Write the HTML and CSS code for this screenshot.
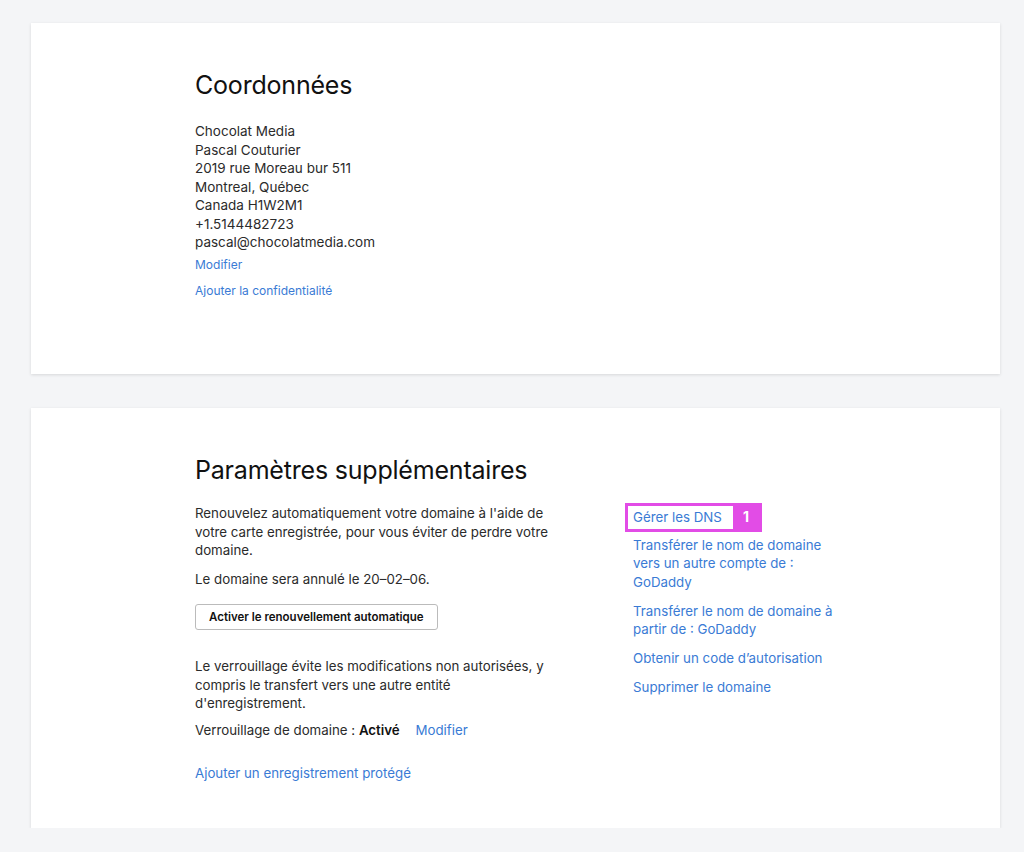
FILE: index.html
```html
<!doctype html>
<html lang="fr">
  <head>
    <meta charset="UTF-8" />
    <meta name="viewport" content="width=device-width, initial-scale=1.0" />
    <title>Paramètres du domaine</title>
    <link rel="stylesheet" href="styles.css">
  </head>
  <body>
    <div class="page">
      <section class="card card-contact">
        <h2>Coordonnées</h2>
        <div class="address">
          <div>Chocolat Media</div>
          <div>Pascal Couturier</div>
          <div>2019 rue Moreau bur 511</div>
          <div>Montreal, Québec</div>
          <div>Canada H1W2M1</div>
          <div>+1.5144482723</div>
          <div>pascal@chocolatmedia.com</div>
        </div>
        <a href="#" class="small-link">Modifier</a>
        <a href="#" class="small-link privacy">Ajouter la confidentialité</a>
      </section>

      <section class="card card-settings">
        <h2>Paramètres supplémentaires</h2>
        <div class="columns">
          <div class="left">
            <p>Renouvelez automatiquement votre domaine à l'aide de votre carte enregistrée, pour vous éviter de perdre votre domaine.</p>
            <p class="cancel">Le domaine sera annulé le 20–02–06.</p>
            <button class="renew-btn">Activer le renouvellement automatique</button>
            <p class="lock-text">Le verrouillage évite les modifications non autorisées, y compris le transfert vers une autre entité d'enregistrement.</p>
            <p class="lock-status">Verrouillage de domaine : <strong>Activé</strong> <a href="#" class="link">Modifier</a></p>
            <a href="#" class="link protect">Ajouter un enregistrement protégé</a>
          </div>
          <div class="right">
            <div class="dns-wrap">
              <a href="#" class="link dns">Gérer les DNS</a>
              <span class="badge">1</span>
            </div>
            <a href="#" class="link">Transférer le nom de domaine vers un autre compte de : GoDaddy</a>
            <a href="#" class="link">Transférer le nom de domaine à partir de : GoDaddy</a>
            <a href="#" class="link">Obtenir un code d’autorisation</a>
            <a href="#" class="link">Supprimer le domaine</a>
          </div>
        </div>
      </section>
    </div>
  </body>
</html>
```

FILE: styles.css
```css
body {
  font-family: "Inter", "Liberation Sans", sans-serif;
  margin: 0;
  background-color: #f4f5f7;
  color: #2b2b2b;
}

.page {
  width: 969px;
  margin: 0 0 0 31px;
  padding-top: 23px;
}

.card {
  background-color: white;
  box-shadow: 0 1px 3px rgba(0, 0, 0, 0.12);
  padding-left: 164px;
}

.card-contact {
  height: 351px;
  padding-top: 47px;
  box-sizing: border-box;
  margin-bottom: 34px;
}

.card-settings {
  height: 420px;
  padding-top: 47px;
  box-sizing: border-box;
}

h2 {
  font-size: 25px;
  font-weight: 400;
  color: #111;
  margin: 0;
  line-height: 30px;
  letter-spacing: -0.2px;
}

.address {
  margin-top: 22px;
  font-size: 13.5px;
  line-height: 18.5px;
}

.small-link {
  display: block;
  color: #3a7bd5;
  text-decoration: none;
  font-size: 12px;
  margin-top: 4px;
  line-height: 18px;
}

.small-link.privacy {
  margin-top: 8px;
}

.columns {
  display: flex;
  margin-top: 19px;
}

.left {
  width: 360px;
  font-size: 13.3px;
  line-height: 18.5px;
}

.left p {
  margin: 0;
}

.cancel {
  margin-top: 10px !important;
}

.renew-btn {
  margin-top: 16px;
  font-family: inherit;
  font-size: 11.5px;
  font-weight: 600;
  color: #111;
  background: white;
  border: 1px solid #bbb;
  border-radius: 3px;
  height: 26px;
  padding: 0 13px;
}

.lock-text {
  margin-top: 27px !important;
}

.lock-status {
  margin-top: 8px !important;
}

.lock-status strong {
  font-weight: 600;
  color: #111;
  margin-right: 12px;
}

.link {
  color: #3a7bd5;
  text-decoration: none;
}

.protect {
  display: block;
  margin-top: 25px;
}

.right {
  margin-left: 78px;
  width: 205px;
  display: flex;
  flex-direction: column;
  gap: 10.3px;
  font-size: 13.3px;
  line-height: 18.5px;
}

.right .link {
  display: block;
}

.dns-wrap {
  display: flex;
  align-items: stretch;
  margin: -1px 0 -6px -8px;
  width: 137px;
  border: 3px solid #e24ce6;
  box-sizing: border-box;
}

.dns-wrap .dns {
  flex: 1;
  padding: 2px 5px;
}

.badge {
  background: #e24ce6;
  color: white;
  font-weight: 700;
  font-size: 14px;
  width: 26px;
  display: flex;
  align-items: center;
  justify-content: center;
}
```
